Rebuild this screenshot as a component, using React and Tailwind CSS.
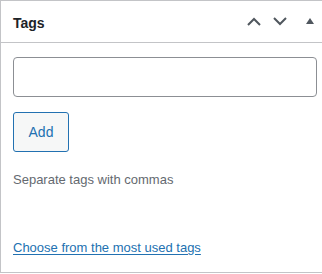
export default function App() {
  return (
    <div className="w-[322px] h-[274px] bg-white font-['Liberation_Sans',Arial,sans-serif]">
      <div className="h-[273px] border-l border-y border-[#c3c4c7] flex flex-col">
        <div className="h-[42px] border-b border-[#c3c4c7] flex items-center pl-3 pr-[8px]">
          <h2 className="text-[14px] font-semibold text-[#1d2327] leading-none pt-[2px]">Tags</h2>
          <div className="ml-auto flex items-center">
            <svg width="14" height="9" viewBox="0 0 14 9" className="text-[#50575e]">
              <path d="M1 8 L7 2 L13 8" fill="none" stroke="currentColor" strokeWidth="2" />
            </svg>
            <svg width="14" height="9" viewBox="0 0 14 9" className="ml-[12px] text-[#50575e]">
              <path d="M1 1 L7 7 L13 1" fill="none" stroke="currentColor" strokeWidth="2" />
            </svg>
            <svg width="8" height="6" viewBox="0 0 8 6" className="ml-[19px] text-[#50575e] -mt-[2px]">
              <path d="M4 0 L8 6 L0 6 Z" fill="currentColor" />
            </svg>
          </div>
        </div>
        <div className="pl-3 pr-[5px]">
          <input type="text" className="mt-[14px] block w-full h-[40px] border border-[#8c8f94] rounded-[4px] px-2 text-[14px] text-[#2c3338] outline-none" />
          <button type="button" className="mt-[15px] block w-[56px] h-[40px] border border-[#2271b1] bg-[#f6f7f7] rounded-[3px] text-[14px] text-[#2271b1]">Add</button>
          <p className="mt-[18px] text-[13px] leading-[20px] text-[#646970]">Separate tags with commas</p>
          <a href="#" className="block mt-[48px] text-[13px] leading-[20px] text-[#2271b1] underline underline-offset-[2px]">Choose from the most used tags</a>
        </div>
      </div>
    </div>
  );
}
